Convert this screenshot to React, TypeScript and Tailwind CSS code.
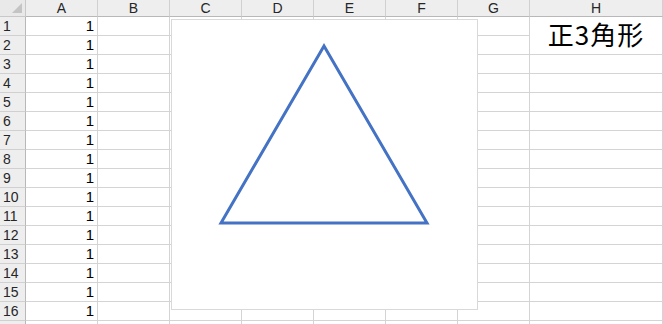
const cols = ["A", "B", "C", "D", "E", "F", "G", "H"];
const rows = Array.from({ length: 17 }, (_, i) => i + 1);

function Cell({ row, col }: { row: number; col: string }) {
	if (col === "H" && row === 2) return null;
	if (col === "H" && row === 1) {
		return (
			<div className="row-span-2 flex items-center justify-center border-r border-b border-[#d4d4d4] bg-white pb-[3px] text-[26px] leading-none tracking-[1px] text-black font-['Noto_Sans_CJK_JP',sans-serif]">
				正3角形
			</div>
		);
	}
	return (
		<div className="flex items-end justify-end border-r border-b border-[#d4d4d4] bg-white pr-[3px] text-[15px] leading-[18px] text-black">
			{col === "A" && row <= 16 ? "1" : ""}
		</div>
	);
}

export default function App() {
	return (
		<div className="relative h-[324px] w-[663px] overflow-hidden bg-white font-['Liberation_Sans',Arial,sans-serif]">
			<div className="grid grid-cols-[26px_repeat(7,72px)_1fr] grid-rows-[17px_repeat(17,19px)]">
				{/* corner */}
				<div className="relative border-r border-b border-[#c8c8c8] bg-[#e9e9e9]">
					<svg className="absolute right-[3px] bottom-[3px]" width="10" height="10" viewBox="0 0 10 10">
						<polygon points="10,0 10,10 0,10" fill="#c4c4c4" />
					</svg>
				</div>
				{cols.map((c) => (
					<div
						key={c}
						className="flex items-center justify-center border-r border-b border-r-[#d0d0d0] border-b-[#b8b8b8] bg-[#eeeeee] text-[14px] leading-none text-[#262626]"
					>
						{c}
					</div>
				))}
				{rows.map((r) => (
					<div key={r} className="contents">
						{/* row 17 only peeks in at the bottom edge, so no label */}
						<div className="flex items-center border-r border-b border-r-[#b8b8b8] border-b-[#d0d0d0] bg-[#eeeeee] pl-[3px] text-[14px] leading-none text-[#262626]">
							{r <= 16 ? r : ""}
						</div>
						{cols.map((c) => (
							<Cell key={c} row={r} col={c} />
						))}
					</div>
				))}
			</div>

			{/* chart object floating over the sheet */}
			<div className="absolute left-[171px] top-[19px] h-[291px] w-[307px] border border-[#d9d9d9] bg-white">
				<svg width="307" height="291" viewBox="0 0 307 291" className="absolute -left-px -top-px">
					<polygon points="153,27 50,204 256,204" fill="none" stroke="#4472c4" strokeWidth="3" strokeLinejoin="miter" />
				</svg>
			</div>
		</div>
	);
}
